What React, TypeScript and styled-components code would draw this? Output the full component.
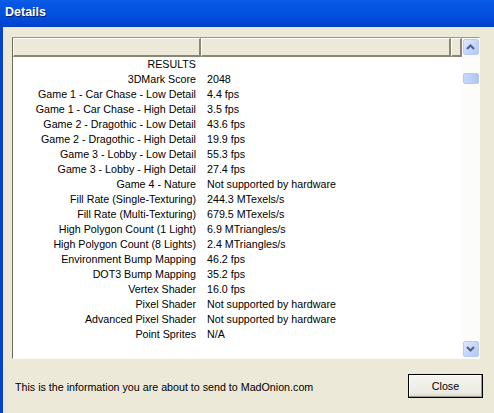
import React from "react";
import styled, { createGlobalStyle } from "styled-components";

const GlobalStyle = createGlobalStyle`
  html, body {
    margin: 0;
    padding: 0;
    background: #ece9d8;
    overflow: hidden;
  }
  * { box-sizing: border-box; }
`;

const Window = styled.div`
  width: 494px;
  height: 413px;
  display: flex;
  flex-direction: column;
  background: #ece9d8;
  border-left: 3px solid #0842c8;
  font-family: "Liberation Sans", Arial, sans-serif;
  font-size: 10.7px;
  color: #000;
`;

const TitleBar = styled.div`
  height: 27px;
  margin-left: -3px;
  padding: 5px 0 0 5px;
  background: linear-gradient(180deg, #0a5ee8 0%, #0656e4 15%, #0250de 50%, #0047d6 85%, #003fc0 100%);
  color: #fff;
  font-family: "Liberation Sans", Arial, sans-serif;
  font-weight: bold;
  font-size: 12.5px;
  text-shadow: 1px 1px 0 #0a1e6e;
`;

const Body = styled.div`
  flex: 1;
  display: flex;
  flex-direction: column;
  padding: 10px 14px 0 9px;
`;

const ListView = styled.div`
  height: 322px;
  display: flex;
  border-top: 1px solid #7f9db9;
  border-left: 1px solid #6e6a5e;
  border-bottom: 1px solid #fbfbf8;
  border-right: 1px solid #fbfbf8;
  background: #fff;
`;

const ListMain = styled.div`
  flex: 1;
  display: flex;
  flex-direction: column;
  overflow: hidden;
`;

const HeaderRow = styled.div`
  height: 19px;
  display: flex;
  background: #ece9d8;
`;

const HeaderCell = styled.div<{ $w?: number }>`
  ${(p) => (p.$w ? `width: ${p.$w}px;` : "flex: 1;")}
  border-top: 1px solid #ffffff;
  border-left: 1px solid #ffffff;
  border-right: 2px solid #8a8676;
  border-bottom: 2px solid #8a8676;
  background: #ece9d8;
`;

const Rows = styled.div`
  display: flex;
  flex-direction: column;
`;

const Row = styled.div`
  height: 15px;
  display: flex;
  align-items: center;
  line-height: 15px;
`;

const Label = styled.div`
  width: 183px;
  text-align: right;
  white-space: nowrap;
`;

const Value = styled.div`
  padding-left: 11px;
  white-space: nowrap;
`;

const Scrollbar = styled.div`
  width: 17px;
  display: flex;
  flex-direction: column;
  align-items: center;
  background: #fcfcfb;
  padding: 1px 0;
`;

const ScrollButton = styled.div`
  width: 16px;
  height: 16px;
  border-radius: 2px;
  border: 1px solid #b8cbf2;
  background: linear-gradient(135deg, #dfe8fd 0%, #c3d3fd 60%, #b4c7f6 100%);
  display: flex;
  align-items: center;
  justify-content: center;
`;

const Track = styled.div`
  flex: 1;
  width: 100%;
  display: flex;
  flex-direction: column;
  align-items: center;
  padding-top: 18px;
`;

const Thumb = styled.div`
  width: 16px;
  height: 11px;
  border-radius: 2px;
  border: 1px solid #b5c8f3;
  background: linear-gradient(90deg, #c8d7fd 0%, #bcd0fa 50%, #b0c4f5 100%);
`;

const Footer = styled.div`
  flex: 1;
  display: flex;
  align-items: flex-start;
  justify-content: space-between;
  padding: 15px 0 0 3px;
`;

const FooterText = styled.div`
  padding-top: 7px;
`;

const CloseButton = styled.button`
  width: 75px;
  height: 24px;
  margin-right: -3px;
  border: 1px solid #000;
  border-radius: 0;
  background: linear-gradient(180deg, #f6f5ef 0%, #ecebe3 80%, #d8d5c8 100%);
  box-shadow: inset -1px -1px 0 #9d9a8e, inset 1px 1px 0 #fff;
  font-family: "Liberation Sans", Arial, sans-serif;
  font-size: 10.7px;
  color: #000;
  padding: 0;
  cursor: pointer;
`;

const results: [string, string][] = [
  ["RESULTS", ""],
  ["3DMark Score", "2048"],
  ["Game 1 - Car Chase - Low Detail", "4.4 fps"],
  ["Game 1 - Car Chase - High Detail", "3.5 fps"],
  ["Game 2 - Dragothic - Low Detail", "43.6 fps"],
  ["Game 2 - Dragothic - High Detail", "19.9 fps"],
  ["Game 3 - Lobby - Low Detail", "55.3 fps"],
  ["Game 3 - Lobby - High Detail", "27.4 fps"],
  ["Game 4 - Nature", "Not supported by hardware"],
  ["Fill Rate (Single-Texturing)", "244.3 MTexels/s"],
  ["Fill Rate (Multi-Texturing)", "679.5 MTexels/s"],
  ["High Polygon Count (1 Light)", "6.9 MTriangles/s"],
  ["High Polygon Count (8 Lights)", "2.4 MTriangles/s"],
  ["Environment Bump Mapping", "46.2 fps"],
  ["DOT3 Bump Mapping", "35.2 fps"],
  ["Vertex Shader", "16.0 fps"],
  ["Pixel Shader", "Not supported by hardware"],
  ["Advanced Pixel Shader", "Not supported by hardware"],
  ["Point Sprites", "N/A"],
];

const Chevron: React.FC<{ down?: boolean }> = ({ down }) => (
  <svg width="9" height="6" viewBox="0 0 9 6">
    <path
      d={down ? "M1 1 L4.5 4.5 L8 1" : "M1 5 L4.5 1.5 L8 5"}
      fill="none"
      stroke="#4d6185"
      strokeWidth="2"
    />
  </svg>
);

const App: React.FC = () => {
  return (
    <>
      <GlobalStyle />
      <Window>
        <TitleBar>Details</TitleBar>
        <Body>
          <ListView>
            <ListMain>
              <HeaderRow>
                <HeaderCell $w={188} />
                <HeaderCell $w={250} />
                <HeaderCell />
              </HeaderRow>
              <Rows>
                {results.map(([label, value]) => (
                  <Row key={label}>
                    <Label>{label}</Label>
                    <Value>{value}</Value>
                  </Row>
                ))}
              </Rows>
            </ListMain>
            <Scrollbar>
              <ScrollButton>
                <Chevron />
              </ScrollButton>
              <Track>
                <Thumb />
              </Track>
              <ScrollButton>
                <Chevron down />
              </ScrollButton>
            </Scrollbar>
          </ListView>
          <Footer>
            <FooterText>This is the information you are about to send to MadOnion.com</FooterText>
            <CloseButton type="button">Close</CloseButton>
          </Footer>
        </Body>
      </Window>
    </>
  );
};

export default App;
